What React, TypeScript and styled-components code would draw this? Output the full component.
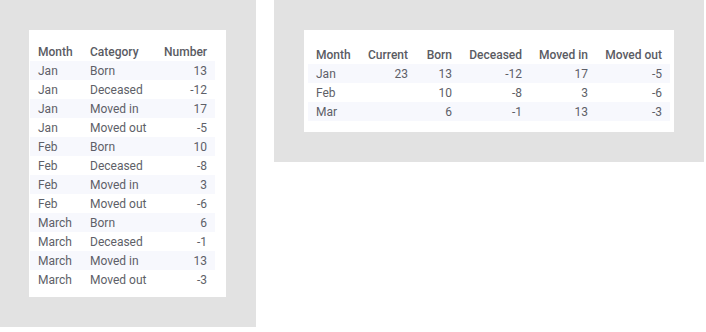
import styled, { createGlobalStyle } from 'styled-components';

const longRows = [
  ['Jan', 'Born', '13'],
  ['Jan', 'Deceased', '-12'],
  ['Jan', 'Moved in', '17'],
  ['Jan', 'Moved out', '-5'],
  ['Feb', 'Born', '10'],
  ['Feb', 'Deceased', '-8'],
  ['Feb', 'Moved in', '3'],
  ['Feb', 'Moved out', '-6'],
  ['March', 'Born', '6'],
  ['March', 'Deceased', '-1'],
  ['March', 'Moved in', '13'],
  ['March', 'Moved out', '-3'],
];

const longCols = [52, 74, 59];

const wideHeaders = ['Month', 'Current', 'Born', 'Deceased', 'Moved in', 'Moved out'];
const wideCols = [52, 56, 44, 70, 66, 74];
const wideRows = [
  ['Jan', '23', '13', '-12', '17', '-5'],
  ['Feb', '', '10', '-8', '3', '-6'],
  ['Mar', '', '6', '-1', '13', '-3'],
];

function App() {
  return (
    <>
      <GlobalStyle />
      <Page>
        <LeftPanel>
          <Card $pad="12px 11px 8px 1px">
            <Table style={{ width: 185 }}>
              <colgroup>
                {longCols.map((w, i) => (
                  <col key={i} style={{ width: w }} />
                ))}
              </colgroup>
              <thead>
                <tr>
                  <Th>Month</Th>
                  <Th>Category</Th>
                  <Th $right>Number</Th>
                </tr>
              </thead>
              <tbody>
                {longRows.map((r, i) => (
                  <Row key={i} $stripe={i % 2 === 0}>
                    <Td>{r[0]}</Td>
                    <Td>{r[1]}</Td>
                    <Td $right>{r[2]}</Td>
                  </Row>
                ))}
              </tbody>
            </Table>
          </Card>
        </LeftPanel>
        <RightPanel>
          <Card $pad="15px 4px 11px 4px">
            <Table style={{ width: 362 }}>
              <colgroup>
                {wideCols.map((w, i) => (
                  <col key={i} style={{ width: w }} />
                ))}
              </colgroup>
              <thead>
                <tr>
                  {wideHeaders.map((h, i) => (
                    <Th key={h} $right={i > 0}>{h}</Th>
                  ))}
                </tr>
              </thead>
              <tbody>
                {wideRows.map((r, i) => (
                  <Row key={i} $stripe={i % 2 === 0}>
                    {r.map((c, j) => (
                      <Td key={j} $right={j > 0}>{c}</Td>
                    ))}
                  </Row>
                ))}
              </tbody>
            </Table>
          </Card>
        </RightPanel>
      </Page>
    </>
  );
}

const GlobalStyle = createGlobalStyle`
  html, body {
    margin: 0;
    padding: 0;
    background: #ffffff;
  }
  body {
    font-family: Roboto, "Liberation Sans", sans-serif;
  }
`;

const Page = styled.div`
  display: flex;
  align-items: flex-start;
  gap: 18px;
  width: 706px;
  height: 332px;
`;

const LeftPanel = styled.div`
  width: 256px;
  height: 327px;
  background: #e2e2e2;
  padding: 30px 0 0 29px;
  box-sizing: border-box;
`;

const RightPanel = styled.div`
  width: 430px;
  height: 162px;
  background: #e2e2e2;
  padding: 30px 0 0 30px;
  box-sizing: border-box;
`;

const Card = styled.div<{ $pad: string }>`
  display: inline-block;
  background: #ffffff;
  padding: ${(p) => p.$pad};
`;

const Table = styled.table`
  border-collapse: collapse;
  table-layout: fixed;
  font-size: 12px;
`;

const Th = styled.th<{ $right?: boolean }>`
  height: 19px;
  padding: 0 8px;
  text-align: ${(p) => (p.$right ? 'right' : 'left')};
  font-weight: 500;
  color: #5a5b63;
  white-space: nowrap;
`;

const Row = styled.tr<{ $stripe: boolean }>`
  background: ${(p) => (p.$stripe ? '#f7f8fd' : '#ffffff')};
`;

const Td = styled.td<{ $right?: boolean }>`
  height: 19px;
  padding: 0 8px;
  text-align: ${(p) => (p.$right ? 'right' : 'left')};
  color: #5e5f68;
  white-space: nowrap;
`;

export default App;
